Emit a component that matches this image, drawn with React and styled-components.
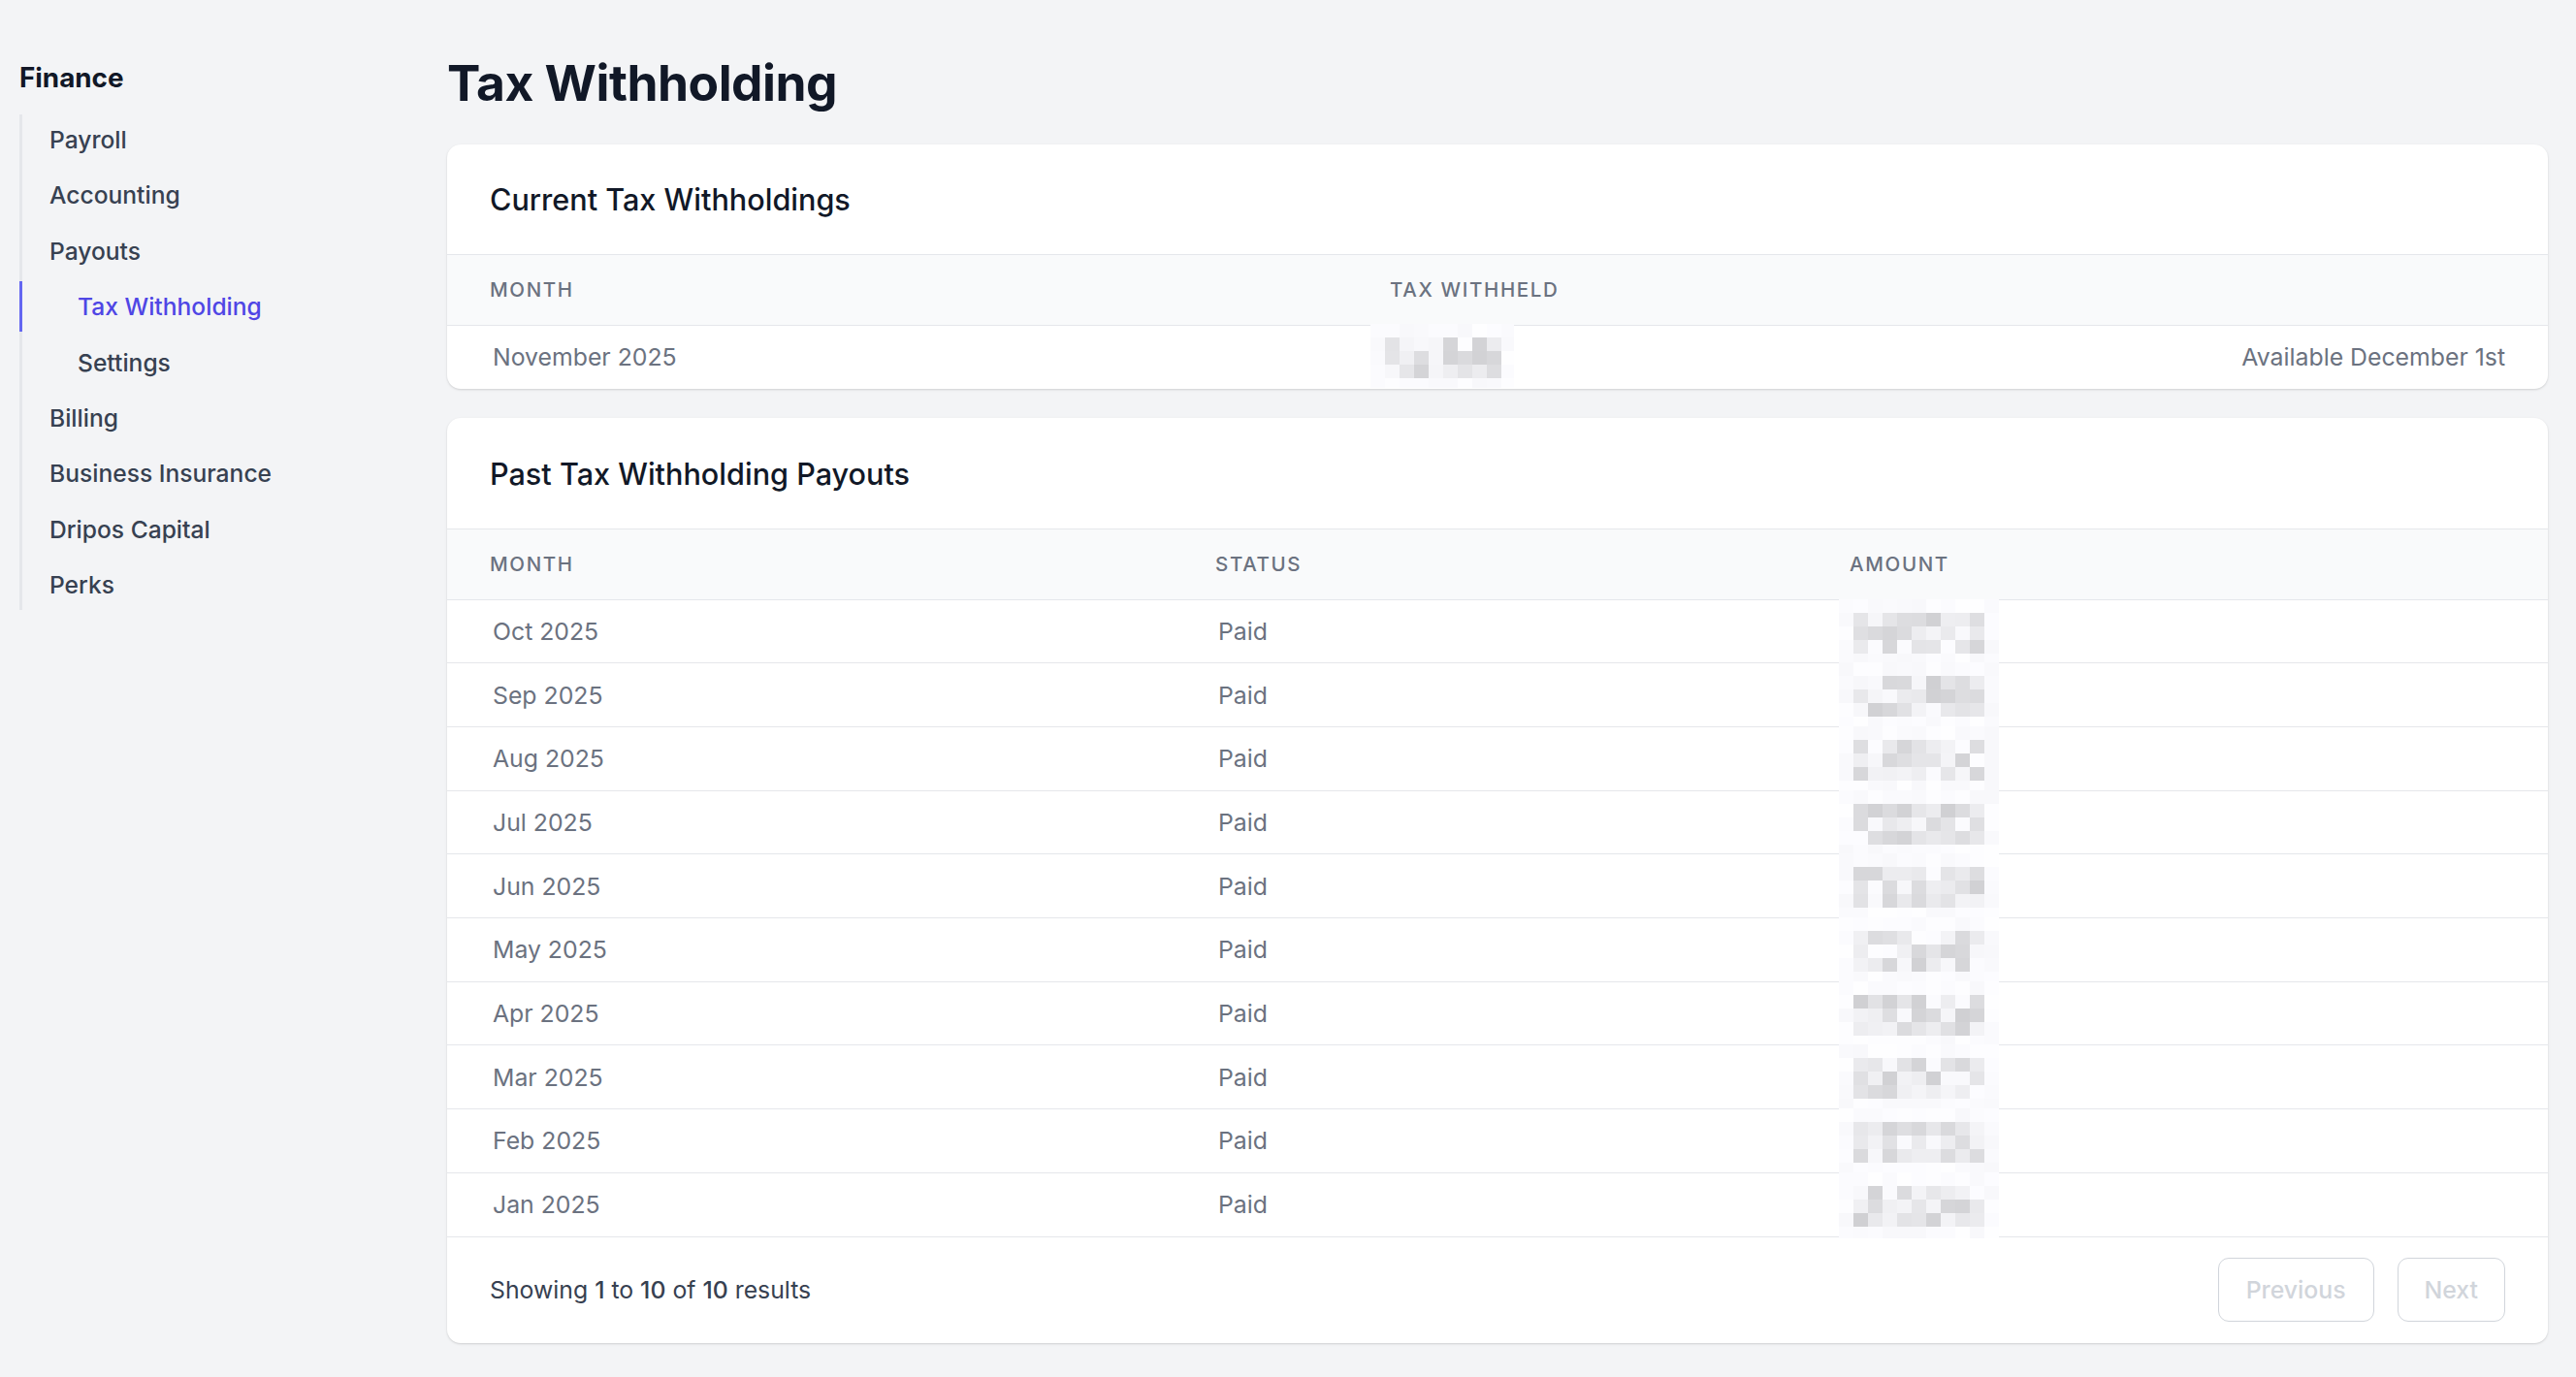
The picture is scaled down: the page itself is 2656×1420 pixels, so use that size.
import React from "react";
import styled, { createGlobalStyle } from "styled-components";

const Global = createGlobalStyle`
  html, body { margin: 0; padding: 0; background: #f3f4f6; }
  body { font-family: Inter, "Noto Sans", "Liberation Sans", sans-serif; -webkit-font-smoothing: antialiased; }
  * { box-sizing: border-box; }
`;

const Page = styled.div`
  display: grid;
  grid-template-columns: 441px 1fr;
  padding: 0 29px 0 20px;
  min-height: 1420px;
`;

const Sidebar = styled.aside`
  display: flex;
  flex-direction: column;
  padding-top: 63px;
`;

const SideTitle = styled.div`
  font-size: 27.8px;
  font-weight: 700;
  color: #111827;
  line-height: 34px;
  margin-bottom: 21px;
`;

const NavList = styled.nav`
  display: flex;
  flex-direction: column;
  gap: 5.4px;
  border-left: 3px solid #e5e7eb;
  width: 360px;
`;

const NavItem = styled.a`
  display: flex;
  align-items: center;
  height: 52px;
  font-size: 24.6px;
  font-weight: 500;
  color: ${(p) => (p.$active ? "#4f46e5" : "#374151")};
  padding-left: ${(p) => (p.$sub ? "57px" : "28px")};
  margin-left: -3px;
  border-left: 3px solid ${(p) => (p.$active ? "#6366f1" : "transparent")};
  text-decoration: none;
`;

const Main = styled.main`
  display: flex;
  flex-direction: column;
  padding-top: 54px;
`;

const PageTitle = styled.h1`
  margin: 0 0 32px 0;
  font-size: 51.5px;
  font-weight: 700;
  line-height: 63px;
  color: #111827;
  letter-spacing: -0.5px;
`;

const Card = styled.section`
  background: #fff;
  border-radius: 14px;
  box-shadow: 0 1px 3px rgba(0, 0, 0, 0.1), 0 1px 2px rgba(0, 0, 0, 0.06);
  overflow: hidden;
  margin-bottom: 30px;
`;

const CardHeader = styled.div`
  display: flex;
  align-items: center;
  height: ${(p) => p.$h || 114}px;
  padding: 0 44px;
  border-bottom: 1px solid #e5e7eb;
`;

const CardTitle = styled.h2`
  margin: 0;
  font-size: 30.6px;
  font-weight: 500;
  color: #111827;
`;

const Table = styled.table`
  width: 100%;
  border-collapse: collapse;
  table-layout: fixed;
`;

const Th = styled.th`
  background: #f9fafb;
  height: 72px;
  padding: 0 44px;
  text-align: left;
  font-size: 20.5px;
  font-weight: 500;
  letter-spacing: 0.08em;
  text-transform: uppercase;
  color: #6b7280;
  border-bottom: 1px solid #e5e7eb;
  width: ${(p) => p.$w || "auto"};
`;

const Td = styled.td`
  height: ${(p) => p.$h || 65.7}px;
  padding: 0 44px 0 47px;
  font-size: 24.8px;
  font-weight: 400;
  color: #6b7280;
  text-align: ${(p) => (p.$right ? "right" : "left")};
  white-space: nowrap;
  position: relative;
`;

const Tr = styled.tr`
  & + & > td {
    border-top: 1px solid #e5e7eb;
  }
`;

const Redact = styled.svg`
  position: absolute;
  left: ${(p) => p.$x}px;
  top: ${(p) => p.$y}px;
  display: block;
`;

const Footer = styled.div`
  display: flex;
  align-items: center;
  justify-content: space-between;
  height: 110px;
  padding: 0 44px;
  border-top: 1px solid #e5e7eb;
`;

const Showing = styled.p`
  margin: 0;
  font-size: 24.8px;
  color: #374151;
  & b {
    font-weight: 500;
  }
`;

const Buttons = styled.div`
  display: flex;
  gap: 24px;
`;

const PageButton = styled.button`
  height: 66px;
  padding: 0 ${(p) => p.$px || 30}px;
  border: 1px solid #d1d5db;
  border-radius: 11px;
  background: #fff;
  font-family: inherit;
  font-size: 24.8px;
  font-weight: 500;
  color: #d1d5db;
`;

function rng(seed) {
  let s = seed;
  return () => {
    s = (s * 9301 + 49297) % 233280;
    return s / 233280;
  };
}

function Mosaic({ seed, w, h, bw, bh, x, y }) {
  const r = rng(seed);
  const cols = Math.ceil(w / bw);
  const rows = Math.ceil(h / bh);
  const rects = [];
  for (let j = 0; j < rows; j++) {
    for (let i = 0; i < cols; i++) {
      const edgeRow = j === 0 || j === rows - 1;
      const edgeCol = i === 0 || i === cols - 1;
      let v;
      if (edgeRow || edgeCol) {
        v = 248 + Math.floor(r() * 7);
      } else {
        const t = r();
        v = t < 0.3 ? 238 + Math.floor(r() * 16) : 208 + Math.floor(r() * 30);
      }
      rects.push(
        <rect
          key={i + "-" + j}
          x={i * bw}
          y={j * bh}
          width={bw}
          height={bh}
          fill={`rgb(${v},${v},${Math.min(255, v + 3)})`}
        />
      );
    }
  }
  return (
    <Redact width={w} height={h} $x={x} $y={y} viewBox={`0 0 ${w} ${h}`}>
      {rects}
    </Redact>
  );
}

const nav = [
  { label: "Payroll" },
  { label: "Accounting" },
  { label: "Payouts" },
  { label: "Tax Withholding", sub: true, active: true },
  { label: "Settings", sub: true },
  { label: "Billing" },
  { label: "Business Insurance" },
  { label: "Dripos Capital" },
  { label: "Perks" },
];

const past = [
  "Oct 2025",
  "Sep 2025",
  "Aug 2025",
  "Jul 2025",
  "Jun 2025",
  "May 2025",
  "Apr 2025",
  "Mar 2025",
  "Feb 2025",
  "Jan 2025",
];

export default function App() {
  return (
    <>
      <Global />
      <Page>
        <Sidebar>
          <SideTitle>Finance</SideTitle>
          <NavList>
            {nav.map((n) => (
              <NavItem key={n.label} $sub={n.sub} $active={n.active}>
                {n.label}
              </NavItem>
            ))}
          </NavList>
        </Sidebar>
        <Main>
          <PageTitle>Tax Withholding</PageTitle>
          <Card>
            <CardHeader>
              <CardTitle>Current Tax Withholdings</CardTitle>
            </CardHeader>
            <Table>
              <thead>
                <tr>
                  <Th $w="928px">Month</Th>
                  <Th $w="600px">Tax Withheld</Th>
                  <Th />
                </tr>
              </thead>
              <tbody>
                <Tr>
                  <Td $h={66}>November 2025</Td>
                  <Td $h={66}>
                    <Mosaic seed={7} w={148} h={66} bw={15} bh={14} x={24} y={-2} />
                  </Td>
                  <Td $h={66} $right>
                    Available December 1st
                  </Td>
                </Tr>
              </tbody>
            </Table>
          </Card>
          <Card>
            <CardHeader $h={115}>
              <CardTitle>Past Tax Withholding Payouts</CardTitle>
            </CardHeader>
            <Table>
              <thead>
                <tr>
                  <Th $w="748px">Month</Th>
                  <Th $w="654px">Status</Th>
                  <Th>Amount</Th>
                </tr>
              </thead>
              <tbody>
                {past.map((m, i) => (
                  <Tr key={m}>
                    <Td>{m}</Td>
                    <Td>Paid</Td>
                    <Td>
                      <Mosaic seed={31 + i * 17} w={165} h={68} bw={15} bh={14} x={33} y={-1} />
                    </Td>
                  </Tr>
                ))}
              </tbody>
            </Table>
            <Footer>
              <Showing>
                Showing <b>1</b> to <b>10</b> of <b>10</b> results
              </Showing>
              <Buttons>
                <PageButton $px={28}>Previous</PageButton>
                <PageButton $px={27}>Next</PageButton>
              </Buttons>
            </Footer>
          </Card>
        </Main>
      </Page>
    </>
  );
}
